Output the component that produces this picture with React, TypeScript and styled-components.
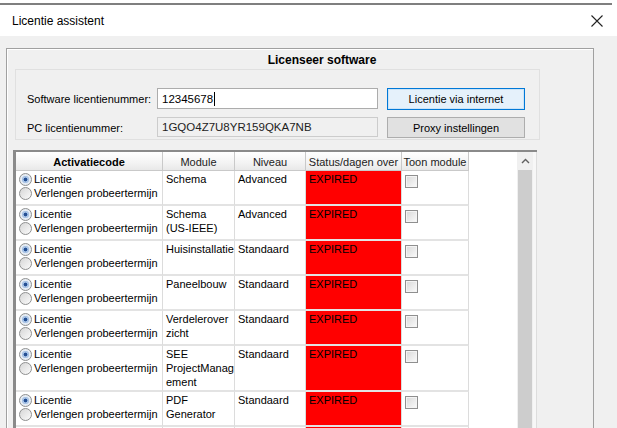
import React from "react"
import styled, { createGlobalStyle } from "styled-components"

const GlobalStyle = createGlobalStyle`
  html, body {
    margin: 0;
    padding: 0;
    background: #ffffff;
  }
  body {
    font-family: "Liberation Sans", Arial, sans-serif;
  }
`

type Row = {
  module: string[]
  niveau: string
  tall?: boolean
  empty?: boolean
}

const rows: Row[] = [
  { module: ["Schema"], niveau: "Advanced" },
  { module: ["Schema", "(US-IEEE)"], niveau: "Advanced" },
  { module: ["Huisinstallatie"], niveau: "Standaard" },
  { module: ["Paneelbouw"], niveau: "Standaard" },
  { module: ["Verdelerover", "zicht"], niveau: "Standaard" },
  { module: ["SEE", "ProjectManag", "ement"], niveau: "Standaard", tall: true },
  { module: ["PDF", "Generator"], niveau: "Standaard" },
  { module: [], niveau: "", empty: true },
]

const CloseIcon = () => (
  <svg width="12" height="12" viewBox="0 0 12 12">
    <path d="M0.5 0.5 L11.5 11.5 M11.5 0.5 L0.5 11.5" stroke="#222" strokeWidth="1.1" fill="none" />
  </svg>
)

const ChevronUp = () => (
  <svg width="9" height="6" viewBox="0 0 9 6">
    <path d="M1 5 L4.5 1.5 L8 5" stroke="#606060" strokeWidth="1.4" fill="none" />
  </svg>
)

export default function App() {
  return <S.Window>
    <GlobalStyle />
    <S.TopLine />
    <S.TitleBar>
      <S.Title>Licentie assistent</S.Title>
      <S.CloseButton><CloseIcon /></S.CloseButton>
    </S.TitleBar>
    <S.Body>
      <S.GroupBox>
        <S.Legend>Licenseer software</S.Legend>
        <S.InnerPanel>
          <S.FormRow>
            <S.Label>Software licentienummer:</S.Label>
            <S.Input>12345678<S.Caret /></S.Input>
            <S.Button $primary>Licentie via internet</S.Button>
          </S.FormRow>
          <S.FormRow $short>
            <S.Label>PC licentienummer:</S.Label>
            <S.Input $readonly>1GQO4Z7U8YR159QKA7NB</S.Input>
            <S.Button>Proxy instellingen</S.Button>
          </S.FormRow>
        </S.InnerPanel>

        <S.GridFrame>
          <S.TableArea>
            <S.HeaderRow>
              <S.HeaderCell $bold>Activatiecode</S.HeaderCell>
              <S.HeaderCell>Module</S.HeaderCell>
              <S.HeaderCell>Niveau</S.HeaderCell>
              <S.HeaderCell>Status/dagen over</S.HeaderCell>
              <S.HeaderCell>Toon module</S.HeaderCell>
            </S.HeaderRow>
            {
              rows.map((row, index) => {
                return <S.DataRow key={"__row_" + index} $tall={row.tall}>
                  <S.Cell>
                    {!row.empty && <>
                      <S.RadioLine><S.Radio $checked />Licentie</S.RadioLine>
                      <S.RadioLine><S.Radio />Verlengen probeertermijn</S.RadioLine>
                    </>}
                  </S.Cell>
                  <S.Cell>
                    {row.module.map(line => <S.TextLine key={line}>{line}</S.TextLine>)}
                  </S.Cell>
                  <S.Cell><S.TextLine>{row.niveau}</S.TextLine></S.Cell>
                  <S.Cell $expired>{!row.empty && <S.TextLine>EXPIRED</S.TextLine>}</S.Cell>
                  <S.Cell>{!row.empty && <S.Checkbox />}</S.Cell>
                </S.DataRow>
              })
            }
          </S.TableArea>
          <S.ScrollBar>
            <S.ScrollArrow><ChevronUp /></S.ScrollArrow>
            <S.ScrollThumb />
          </S.ScrollBar>
          <S.GridEdge />
        </S.GridFrame>
      </S.GroupBox>
    </S.Body>
  </S.Window>
}

const S = {
  Window: styled.div`
    width: 617px;
    height: 428px;
    display: flex;
    flex-direction: column;
    overflow: hidden;
    background: #ffffff;
  `,
  TopLine: styled.div`
    width: 612px;
    height: 2px;
    margin-top: 3px;
    background: #7f7f7f;
    flex-shrink: 0;
  `,
  TitleBar: styled.div`
    height: 31px;
    display: flex;
    align-items: center;
    justify-content: space-between;
    padding: 0 14px 0 12px;
    flex-shrink: 0;
  `,
  Title: styled.div`
    font-size: 12px;
    color: #000;
  `,
  CloseButton: styled.div`
    display: flex;
    align-items: center;
    padding-top: 1px;
  `,
  Body: styled.div`
    flex: 1;
    background: #f0f0f0;
    padding: 12px 23px 0 6px;
    overflow: hidden;
  `,
  GroupBox: styled.div`
    width: 588px;
    height: 420px;
    box-sizing: border-box;
    border: 1px solid #a0a0a0;
    box-shadow: inset 1px 1px 0 #ffffff;
  `,
  Legend: styled.div`
    height: 20px;
    display: flex;
    align-items: center;
    justify-content: center;
    font-size: 12px;
    font-weight: bold;
    color: #000;
    padding-left: 44px;
    padding-top: 1px;
    box-sizing: border-box;
  `,
  InnerPanel: styled.div`
    width: 525px;
    height: 71px;
    box-sizing: border-box;
    margin-left: 8px;
    border: 1px solid #e0e0e0;
    padding: 18px 0 0 11px;
    display: flex;
    flex-direction: column;
    gap: 7px;
  `,
  FormRow: styled.div<{ $short?: boolean }>`
    display: grid;
    grid-template-columns: 121px 221px 138px;
    column-gap: 9px;
    height: ${p => p.$short ? 21 : 22}px;
    align-items: stretch;
  `,
  Label: styled.div`
    display: flex;
    align-items: center;
    font-size: 11px;
    color: #000;
    white-space: nowrap;
  `,
  Input: styled.div<{ $readonly?: boolean }>`
    display: flex;
    align-items: center;
    box-sizing: border-box;
    padding-left: 4px;
    font-size: 11.5px;
    color: ${p => p.$readonly ? "#222" : "#000"};
    background: ${p => p.$readonly ? "#f0f0f0" : "#ffffff"};
    border: 1px solid ${p => p.$readonly ? "#cccccc" : "#acacac"};
    height: ${p => p.$readonly ? 20 : 21}px;
  `,
  Caret: styled.span`
    display: inline-block;
    width: 1px;
    height: 14px;
    margin-left: 1px;
    background: #000;
  `,
  Button: styled.div<{ $primary?: boolean }>`
    display: flex;
    align-items: center;
    justify-content: center;
    box-sizing: border-box;
    font-size: 11px;
    color: #000;
    background: ${p => p.$primary ? "#e5f1fb" : "#e1e1e1"};
    border: 1px solid ${p => p.$primary ? "#0078d7" : "#adadad"};
    box-shadow: ${p => p.$primary ? "inset 0 0 0 1px #cce4f7" : "none"};
  `,
  GridFrame: styled.div`
    display: flex;
    width: 524px;
    height: 300px;
    margin: 10px 0 0 6px;
    border-top: 2px solid #8a8a8a;
    border-left: 3px solid #8a8a8a;
    box-sizing: border-box;
    background: #ffffff;
  `,
  TableArea: styled.div`
    flex: 0 0 501px;
    background: #ffffff;
    font-size: 11px;
  `,
  HeaderRow: styled.div`
    display: grid;
    grid-template-columns: 147px 72px 71px 96px 67px;
    height: 19px;
  `,
  HeaderCell: styled.div<{ $bold?: boolean }>`
    display: flex;
    align-items: center;
    justify-content: center;
    box-sizing: border-box;
    white-space: nowrap;
    overflow: hidden;
    font-weight: ${p => p.$bold ? "bold" : "normal"};
    color: ${p => p.$bold ? "#000" : "#222"};
    background: linear-gradient(#ffffff, #f3f3f3 60%, #e8e8e8);
    border-right: 1px solid #c9c9c9;
    border-bottom: 1px solid #c9c9c9;
    padding-top: 1px;
  `,
  DataRow: styled.div<{ $tall?: boolean }>`
    display: grid;
    grid-template-columns: 147px 72px 71px 96px 67px;
    height: ${p => p.$tall ? 46 : 35}px;
  `,
  Cell: styled.div<{ $expired?: boolean }>`
    box-sizing: border-box;
    padding: 1px 0 0 3px;
    border-right: 1px solid #dcdcdc;
    border-bottom: 2px solid #e3e3e3;
    background: ${p => p.$expired ? "#ff0000" : "#ffffff"};
    color: #000;
    overflow: hidden;
  `,
  TextLine: styled.div`
    height: 14px;
    line-height: 14px;
    white-space: nowrap;
  `,
  RadioLine: styled.div`
    display: flex;
    align-items: center;
    gap: 2px;
    height: 14px;
    line-height: 14px;
    white-space: nowrap;
  `,
  Radio: styled.span<{ $checked?: boolean }>`
    width: 11px;
    height: 11px;
    border-radius: 50%;
    border: 1px solid #8e8f8f;
    flex-shrink: 0;
    background: ${p => p.$checked
      ? "radial-gradient(circle, #244f93 0 1.6px, #a9c4e6 2.2px 3.4px, #e6ecf3 4px)"
      : "linear-gradient(135deg, #d6d6d6, #fbfbfb)"};
  `,
  Checkbox: styled.span`
    display: block;
    width: 11px;
    height: 11px;
    margin-top: 3px;
    border: 1px solid #8f8f8f;
    background: linear-gradient(135deg, #d8d8d8, #fbfbfb);
    box-shadow: inset 0 0 0 1px #f4f4f4;
  `,
  ScrollBar: styled.div`
    flex: 0 0 16px;
    display: flex;
    flex-direction: column;
    background: #f0f0f0;
  `,
  ScrollArrow: styled.div`
    height: 18px;
    display: flex;
    align-items: center;
    justify-content: center;
  `,
  ScrollThumb: styled.div`
    flex: 1;
    background: #cdcdcd;
    margin: 0 1px;
  `,
  GridEdge: styled.div`
    flex: 1;
    background: #f7f7f7;
    border-right: 1px solid #dddddd;
  `,
}
